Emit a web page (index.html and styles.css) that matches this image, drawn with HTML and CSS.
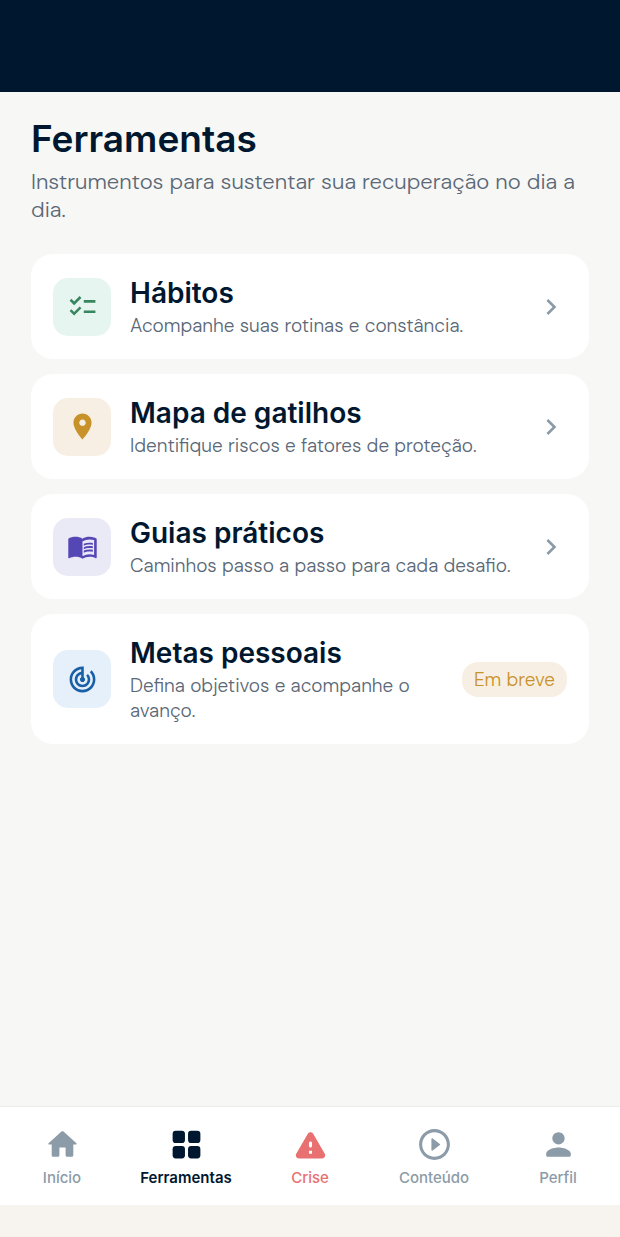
FILE: index.html
```html
<!DOCTYPE html>
<html lang="pt-BR">
<head>
  <meta charset="UTF-8">
  <meta name="viewport" content="width=device-width, initial-scale=1.0">
  <title>Ferramentas</title>
  <link rel="stylesheet" href="styles.css">
</head>
<body>

  <header class="topbar"></header>

  <main class="content">
    <h1>Ferramentas</h1>
    <p class="subtitle">Instrumentos para sustentar sua recuperação no dia a dia.</p>

    <div class="tools">
      <a class="card" href="#habitos">
        <span class="card-icon green">
          <svg viewBox="0 0 24 24"><path d="M22 7h-9v2h9V7zm0 8h-9v2h9v-2zM5.54 11 2 7.46l1.41-1.41 2.12 2.12 4.24-4.24 1.41 1.41L5.54 11zm0 8L2 15.46l1.41-1.41 2.12 2.12 4.24-4.24 1.41 1.41L5.54 19z"/></svg>
        </span>
        <div class="card-text">
          <h2>Hábitos</h2>
          <p>Acompanhe suas rotinas e constância.</p>
        </div>
        <svg class="chevron" viewBox="0 0 24 24"><path d="M10 6 8.59 7.41 13.17 12l-4.58 4.59L10 18l6-6z"/></svg>
      </a>

      <a class="card" href="#gatilhos">
        <span class="card-icon amber">
          <svg viewBox="0 0 24 24"><path d="M12 2C8.13 2 5 5.13 5 9c0 5.25 7 13 7 13s7-7.75 7-13c0-3.87-3.13-7-7-7zm0 9.5c-1.38 0-2.5-1.12-2.5-2.5s1.12-2.5 2.5-2.5 2.5 1.12 2.5 2.5-1.12 2.5-2.5 2.5z"/></svg>
        </span>
        <div class="card-text">
          <h2>Mapa de gatilhos</h2>
          <p>Identifique riscos e fatores de proteção.</p>
        </div>
        <svg class="chevron" viewBox="0 0 24 24"><path d="M10 6 8.59 7.41 13.17 12l-4.58 4.59L10 18l6-6z"/></svg>
      </a>

      <a class="card" href="#guias">
        <span class="card-icon purple">
          <svg viewBox="0 0 24 24"><path d="M21 5c-1.11-.35-2.33-.5-3.5-.5-1.95 0-4.05.4-5.5 1.5-1.45-1.1-3.55-1.5-5.5-1.5S2.45 4.9 1 6v14.65c0 .25.25.5.5.5.1 0 .15-.05.25-.05C3.1 20.45 5.05 20 6.5 20c1.95 0 4.05.4 5.5 1.5 1.35-.85 3.8-1.5 5.5-1.5 1.65 0 3.35.3 4.75 1.05.1.05.15.05.25.05.25 0 .5-.25.5-.5V6c-.6-.45-1.25-.75-2-1zm0 13.5c-1.1-.35-2.3-.5-3.5-.5-1.7 0-4.15.65-5.5 1.5V8c1.35-.85 3.8-1.5 5.5-1.5 1.2 0 2.4.15 3.5.5v11.5z"/><path d="M17.5 10.5c.88 0 1.73.09 2.5.26V9.24c-.79-.15-1.64-.24-2.5-.24-1.7 0-3.24.29-4.5.83v1.66c1.13-.64 2.7-.99 4.5-.99zM13 12.49v1.66c1.13-.64 2.7-.99 4.5-.99.88 0 1.73.09 2.5.26V11.9c-.79-.15-1.64-.24-2.5-.24-1.7 0-3.24.3-4.5.83zm4.5 1.84c-1.7 0-3.24.29-4.5.83v1.66c1.13-.64 2.7-.99 4.5-.99.88 0 1.73.09 2.5.26v-1.52c-.79-.16-1.64-.24-2.5-.24z"/></svg>
        </span>
        <div class="card-text">
          <h2>Guias práticos</h2>
          <p>Caminhos passo a passo para cada desafio.</p>
        </div>
        <svg class="chevron" viewBox="0 0 24 24"><path d="M10 6 8.59 7.41 13.17 12l-4.58 4.59L10 18l6-6z"/></svg>
      </a>

      <div class="card">
        <span class="card-icon blue">
          <svg viewBox="0 0 24 24"><path d="M19.07 4.93l-1.41 1.41C19.1 7.79 20 9.79 20 12c0 4.42-3.58 8-8 8s-8-3.58-8-8c0-4.08 3.05-7.44 7-7.93v2.02C8.16 6.57 6 9.03 6 12c0 3.31 2.69 6 6 6s6-2.69 6-6c0-1.66-.67-3.16-1.76-4.24l-1.41 1.41C15.55 9.9 16 10.9 16 12c0 2.21-1.79 4-4 4s-4-1.79-4-4c0-1.86 1.28-3.41 3-3.86v2.14c-.6.35-1 .98-1 1.72 0 1.1.9 2 2 2s2-.9 2-2c0-.74-.4-1.38-1-1.72V2h-1C6.48 2 2 6.48 2 12s4.48 10 10 10 10-4.48 10-10c0-2.76-1.12-5.26-2.93-7.07z"/></svg>
        </span>
        <div class="card-text">
          <h2>Metas pessoais</h2>
          <p>Defina objetivos e acompanhe o avanço.</p>
        </div>
        <span class="badge">Em breve</span>
      </div>
    </div>
  </main>

  <nav class="tabbar">
    <a class="tab" href="#inicio">
      <svg viewBox="0 0 24 24"><path d="M10 19v-5h4v5c0 .55.45 1 1 1h3c.55 0 1-.45 1-1v-7h1.7c.46 0 .68-.57.33-.87L12.67 3.6c-.38-.34-.96-.34-1.34 0l-8.36 7.53c-.34.3-.13.87.33.87H5v7c0 .55.45 1 1 1h3c.55 0 1-.45 1-1z"/></svg>
      Início
    </a>
    <a class="tab active" href="#ferramentas">
      <svg viewBox="0 0 24 24"><rect x="3" y="3" width="8" height="8" rx="2"/><rect x="13" y="3" width="8" height="8" rx="2"/><rect x="3" y="13" width="8" height="8" rx="2"/><rect x="13" y="13" width="8" height="8" rx="2"/></svg>
      Ferramentas
    </a>
    <a class="tab crisis" href="#crise">
      <svg viewBox="0 0 24 24"><path d="M4.47 21h15.06c1.54 0 2.5-1.67 1.73-3L13.73 4.99c-.77-1.33-2.69-1.33-3.46 0L2.74 18c-.77 1.33.19 3 1.73 3zM12 14c-.55 0-1-.45-1-1v-2c0-.55.45-1 1-1s1 .45 1 1v2c0 .55-.45 1-1 1zm1 4h-2v-2h2v2z"/></svg>
      Crise
    </a>
    <a class="tab" href="#conteudo">
      <svg viewBox="0 0 24 24"><path d="M10.8 15.9l4.67-3.5c.27-.2.27-.6 0-.8L10.8 8.1c-.33-.25-.8-.01-.8.4v7c0 .41.47.65.8.4zM12 2C6.48 2 2 6.48 2 12s4.48 10 10 10 10-4.48 10-10S17.52 2 12 2zm0 18c-4.41 0-8-3.59-8-8s3.59-8 8-8 8 3.59 8 8-3.59 8-8 8z"/></svg>
      Conteúdo
    </a>
    <a class="tab" href="#perfil">
      <svg viewBox="0 0 24 24"><path d="M12 12c2.21 0 4-1.79 4-4s-1.79-4-4-4-4 1.79-4 4 1.79 4 4 4zm0 2c-2.67 0-8 1.34-8 4v1c0 .55.45 1 1 1h14c.55 0 1-.45 1-1v-1c0-2.66-5.33-4-8-4z"/></svg>
      Perfil
    </a>
  </nav>

</body>
</html>
```
FILE: styles.css
```css
* {
  box-sizing: border-box;
}
body {
  font-family: "DM Sans", Inter, sans-serif;
  background-color: #f7f3ee;
  color: #001730;
  margin: 0;
  min-height: 100vh;
  display: flex;
  flex-direction: column;
}
h1, h2, p {
  margin: 0;
}
a {
  color: inherit;
  text-decoration: none;
}
svg {
  display: block;
  fill: currentColor;
}
.topbar {
  height: 92px;
  background-color: #001730;
}
.content {
  flex: 1;
  padding: 24px 31px;
  background-color: #f7f7f5;
}
h1 {
  font-family: Inter, sans-serif;
  font-size: 37px;
  font-weight: 600;
  line-height: 46px;
}
.subtitle {
  margin-top: 6px;
  font-size: 22px;
  font-weight: 300;
  line-height: 28px;
  color: #5a6877;
}
.tools {
  display: flex;
  flex-direction: column;
  gap: 15px;
  margin-top: 30px;
}
.card {
  display: flex;
  align-items: center;
  gap: 19px;
  padding: 21px 22px;
  border-radius: 22px;
  background-color: #ffffff;
}
.card-icon {
  flex: none;
  display: flex;
  align-items: center;
  justify-content: center;
  width: 58px;
  height: 58px;
  border-radius: 15px;
}
.card-icon svg {
  width: 31px;
  height: 31px;
}
.green {
  background-color: #e7f5f0;
  color: #37865f;
}
.amber {
  background-color: #f7efe3;
  color: #c8922a;
}
.purple {
  background-color: #eae9f6;
  color: #5546b5;
}
.blue {
  background-color: #e6f0fb;
  color: #185fa5;
}
.card-text {
  flex: 1;
}
h2 {
  font-family: Inter, sans-serif;
  font-size: 28px;
  font-weight: 600;
  line-height: 36px;
}
.card-text p {
  margin-top: 2px;
  font-size: 19px;
  font-weight: 300;
  line-height: 25px;
  color: #5a6877;
}
.chevron {
  flex: none;
  width: 32px;
  height: 32px;
  color: #8c9ba8;
}
.badge {
  flex: none;
  padding: 5px 12px;
  border-radius: 16px;
  background-color: #f7efe3;
  color: #c8922a;
  font-size: 19px;
  font-weight: 300;
  line-height: 25px;
}
.tabbar {
  display: flex;
  margin-bottom: 32px;
  padding: 19px 0 17px;
  border-top: 1px solid #ececea;
  background-color: #ffffff;
}
.tab {
  flex: 1;
  display: flex;
  flex-direction: column;
  align-items: center;
  gap: 5px;
  font-family: Inter, sans-serif;
  font-size: 15px;
  font-weight: 500;
  line-height: 20px;
  color: #8c9ba8;
}
.tab svg {
  width: 37px;
  height: 37px;
}
.tab.active {
  color: #001730;
  font-weight: 600;
}
.tab.crisis {
  color: #e87070;
}
```
